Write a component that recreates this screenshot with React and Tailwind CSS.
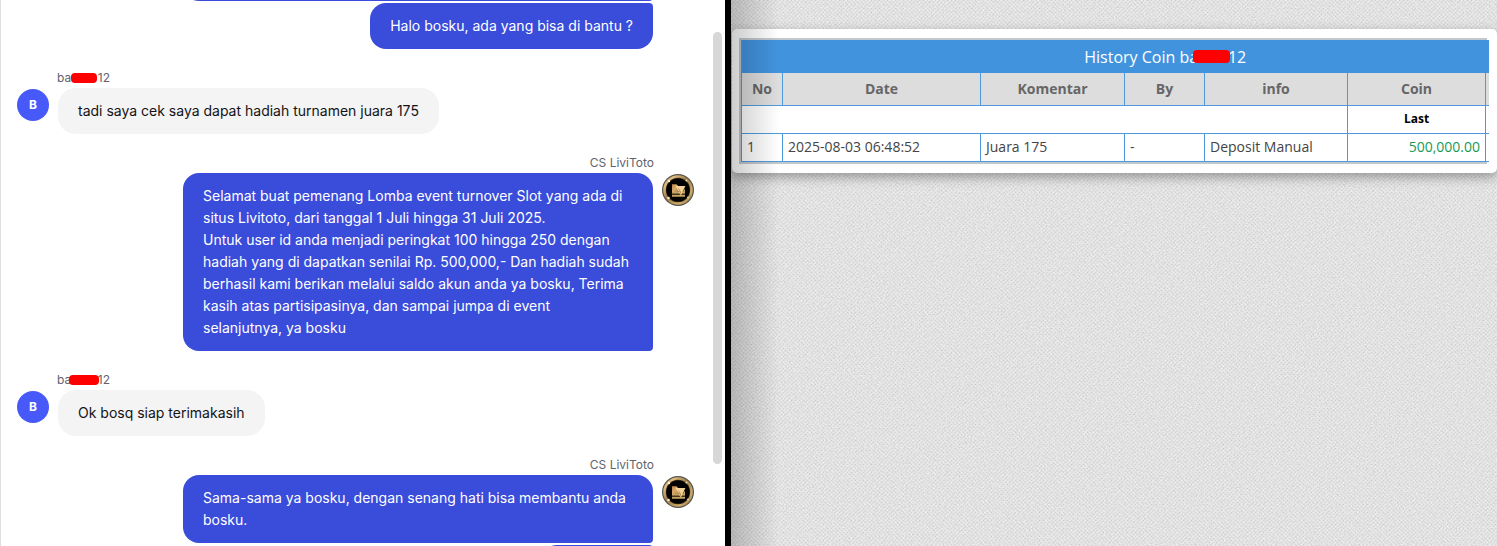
import React from "react";

function Redacted({ before, after, pill, className = "" }) {
  return (
    <span className={`relative inline-flex justify-between ${className}`}>
      <span>{before}</span>
      <span className={`absolute rounded-[4px] bg-[#ff0000] ${pill}`} />
      <span>{after}</span>
    </span>
  );
}

function Coin() {
  return (
    <svg viewBox="0 0 32 32" className="size-8 shrink-0" role="img" aria-label="CS LiviToto">
      <defs>
        <linearGradient id="rim" x1="0" y1="0" x2="1" y2="1">
          <stop offset="0" stopColor="#9a7c48" />
          <stop offset="0.2" stopColor="#e0bd80" />
          <stop offset="0.45" stopColor="#9a7b48" />
          <stop offset="0.75" stopColor="#d0ac6c" />
          <stop offset="1" stopColor="#7e6539" />
        </linearGradient>
        <linearGradient id="mark" x1="0" y1="0" x2="1" y2="1">
          <stop offset="0" stopColor="#b9814a" />
          <stop offset="0.5" stopColor="#d9ab6c" />
          <stop offset="1" stopColor="#a9854a" />
        </linearGradient>
      </defs>
      <circle cx="16" cy="16" r="16" fill="#55524c" />
      <circle cx="16" cy="16" r="14.8" fill="url(#rim)" />
      <circle cx="16" cy="16" r="12.2" fill="#3a2f1c" />
      <circle cx="16" cy="16" r="11.6" fill="#020202" />
      <circle cx="7" cy="7" r="1.2" fill="#fff3cf" />
      <circle cx="24.5" cy="6.5" r="1" fill="#fbe3ac" />
      <circle cx="6.5" cy="24" r="1.3" fill="#ffedbd" />
      <circle cx="26" cy="23.5" r="0.9" fill="#f2d79a" />
      <path d="M10 10.2h4.4l2 2V18H10z" fill="url(#mark)" />
      <path d="M10 18h13v1.8H10zM10 20.8h13v2H10z" fill="#c6a263" />
      <path d="M10 19.8h13v1H10z" fill="#4b3a1e" />
      <path d="M21 18l1-2.4h1V18z" fill="#c6a263" />
      <path d="M13.6 12h9.8l-4.6 9.8z" fill="#f5d296" />
      <path d="M16 13.2l2.8 4.4v4.2z" fill="#b98a50" />
    </svg>
  );
}

function Guest({ pill, children }) {
  return (
    <article className="mt-[21px] flex flex-col items-start">
      <Redacted
        before="ba"
        after="12"
        pill={pill}
        className="ml-10 w-[53px] text-xs text-[#62626d]"
      />
      <div className="mt-0.5 flex items-start gap-[9px]">
        <span className="mt-px flex size-8 shrink-0 items-center justify-center rounded-full bg-[#4759f8] text-xs font-bold text-white">
          B
        </span>
        <p className="rounded-[18px] bg-[#f4f4f4] px-5 py-3 text-[#131317]">{children}</p>
      </div>
    </article>
  );
}

function Agent({ children }) {
  return (
    <article className="mt-[21px] flex flex-col items-end">
      <span className="mr-10 text-xs text-[#62626d]">CS LiviToto</span>
      <div className="mt-0.5 flex items-start gap-[9px]">
        <p className="w-[470px] rounded-2xl rounded-br-[4px] bg-[#3a4cda] px-5 py-3 text-white">
          {children}
        </p>
        <span className="mt-px">
          <Coin />
        </span>
      </div>
    </article>
  );
}

function Chat() {
  return (
    <section className="flex min-w-0 overflow-hidden border-l border-[#dedee2] bg-white font-[Inter,sans-serif]">
      <div className="-mt-[45px] flex min-w-0 flex-1 flex-col pl-4 text-sm leading-[22px]">
        <div className="mr-[41px] h-[46px] w-[470px] shrink-0 self-end rounded-2xl rounded-br-[4px] bg-[#3a4cda]" />
        <p className="mt-0.5 mr-[41px] self-end rounded-2xl rounded-tr-[4px] bg-[#3a4cda] px-5 py-3 text-white">
          Halo bosku, ada yang bisa di bantu ?
        </p>
        <Guest pill="left-[14px] top-[3px] h-[10px] w-[26px]">
          tadi saya cek saya dapat hadiah turnamen juara 175
        </Guest>
        <Agent>
          Selamat buat pemenang Lomba event turnover Slot yang ada di situs Livitoto, dari tanggal 1
          Juli hingga 31 Juli 2025.
          <br />
          Untuk user id anda menjadi peringkat 100 hingga 250 dengan hadiah yang di dapatkan senilai
          Rp. 500,000,- Dan hadiah sudah berhasil kami berikan melalui saldo akun anda ya bosku,
          Terima kasih atas partisipasinya, dan sampai jumpa di event{" "}
          <span className="whitespace-nowrap">selanjutnya, ya bosku</span>
        </Agent>
        <Guest pill="left-[12px] top-[3px] h-[10px] w-[30px]">Ok bosq siap terimakasih</Guest>
        <Agent>Sama-sama ya bosku, dengan senang hati bisa membantu anda bosku.</Agent>
        <div className="mt-0.5 mr-[41px] h-[46px] w-[112px] shrink-0 self-end rounded-2xl rounded-tr-[4px] bg-[#3a4cda]" />
      </div>
      <div className="w-[31px] shrink-0 pt-8 pl-[19px]">
        <div className="h-[432px] w-[9px] rounded-full bg-[#d7d7d9]" />
      </div>
    </section>
  );
}

const line = "border-[#4f9ade]";

function History() {
  return (
    <section className="relative min-w-0 overflow-hidden bg-[#e2e2e2] pt-[29px] pl-px font-['Open_Sans','Noto_Sans',sans-serif]">
      <svg className="absolute inset-0 size-full" aria-hidden="true">
        <defs>
          <filter id="weave" x="0" y="0" width="100%" height="100%" colorInterpolationFilters="sRGB">
            <feTurbulence type="fractalNoise" baseFrequency="0.6 0.7" numOctaves="2" seed="4" />
            <feColorMatrix values="0.14 0.08 0 0 0.775  0.14 0.08 0 0 0.775  0.14 0.08 0 0 0.775  0 0 0 0 1" />
          </filter>
          <pattern id="threads" width="4" height="4" patternUnits="userSpaceOnUse">
            <path d="M0 0h1v1H0zM2 2h1v1H2z" fill="#000" fillOpacity="0.06" />
            <path d="M2 0h1v1H2zM0 2h1v1H0z" fill="#fff" fillOpacity="0.3" />
          </pattern>
        </defs>
        <rect width="100%" height="100%" filter="url(#weave)" />
        <rect width="100%" height="100%" fill="url(#threads)" />
      </svg>
      <div className="relative rounded-[5px] bg-white py-[9px] pr-[10px] pl-[7px] shadow-[0_4px_12px_rgba(0,0,0,0.35)]">
        <div className="border-y-2 border-l-2 border-[#c3c8cc]">
          <table className={`w-full table-fixed border-collapse border-l ${line} text-sm text-[#444]`}>
            <colgroup>
              <col className="w-[41px]" />
              <col className="w-[198px]" />
              <col className="w-[144px]" />
              <col className="w-[80px]" />
              <col className="w-[143px]" />
              <col className="w-[138px]" />
              <col className="w-[3px]" />
            </colgroup>
            <thead>
              <tr className="h-[33px] bg-[#4293de]">
                <th colSpan={7} className="pl-[100px] text-base leading-6 font-normal text-white">
                  <Redacted
                    before="History Coin ba"
                    after="12"
                    pill="left-[109px] top-[5px] h-[13px] w-[37px]"
                    className="w-[162px]"
                  />
                </th>
              </tr>
              <tr className={`h-8 border-b bg-[#dddddd] font-bold text-[#666] ${line}`}>
                {["No", "Date", "Komentar", "By", "info", "Coin"].map((name) => (
                  <th key={name} className={`border-r ${line}`}>
                    {name}
                  </th>
                ))}
                <td />
              </tr>
            </thead>
            <tbody>
              <tr className={`h-7 border-b bg-white ${line}`}>
                <td colSpan={5} className={`border-r ${line}`} />
                <th className={`border-r ${line} text-xs font-bold text-black`}>Last</th>
                <td />
              </tr>
              <tr className={`h-7 border-b bg-white ${line}`}>
                <td className={`border-r pl-[5px] ${line}`}>1</td>
                <td className={`border-r pl-[5px] ${line}`}>2025-08-03 06:48:52</td>
                <td className={`border-r pl-[5px] ${line}`}>Juara 175</td>
                <td className={`border-r pl-[5px] ${line}`}>-</td>
                <td className={`border-r pl-[5px] ${line}`}>Deposit Manual</td>
                <td className={`border-r pr-[5px] text-right text-[#189a55] ${line}`}>500,000.00</td>
                <td />
              </tr>
            </tbody>
          </table>
        </div>
      </div>
      <div className="pointer-events-none absolute inset-y-0 left-0 w-12 bg-linear-to-r from-black/20 to-transparent" />
    </section>
  );
}

export default function App() {
  return (
    <main className="grid h-screen grid-cols-[725fr_6px_766fr] grid-rows-[minmax(0,1fr)] overflow-hidden">
      <Chat />
      <div className="bg-black" />
      <History />
    </main>
  );
}
